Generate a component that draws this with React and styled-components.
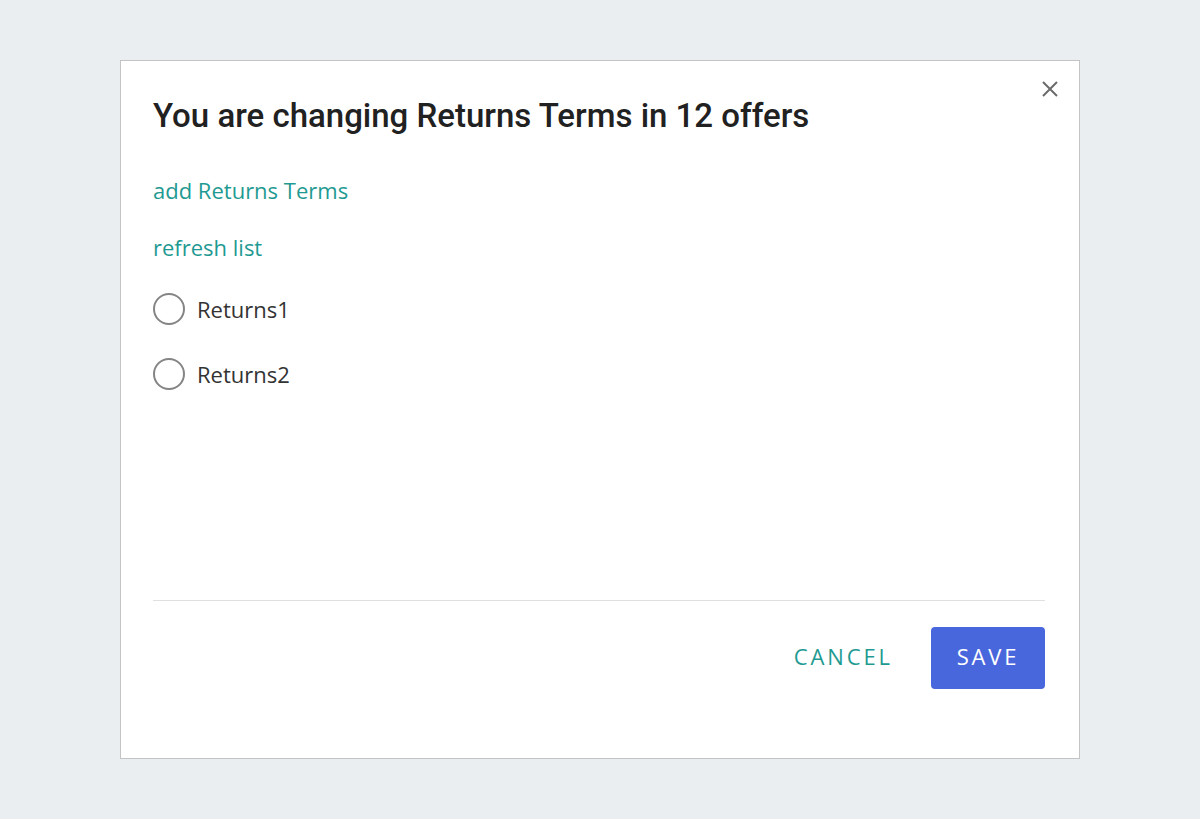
import React, { useState } from "react";
import styled, { createGlobalStyle } from "styled-components";

const GlobalStyle = createGlobalStyle`
  html, body {
    margin: 0;
    padding: 0;
    background: #ebeef1;
  }
  body {
    font-family: "Open Sans", "Liberation Sans", sans-serif;
  }
`;

const Page = styled.div`
  width: 1200px;
  height: 819px;
  display: flex;
  align-items: flex-start;
  justify-content: center;
  padding-top: 60px;
  box-sizing: border-box;
`;

const Dialog = styled.div`
  position: relative;
  width: 960px;
  height: 699px;
  box-sizing: border-box;
  background: #fff;
  border: 1px solid #c4c4c4;
  display: flex;
  flex-direction: column;
  padding: 35px 34px 0 32px;
`;

const CloseButton = styled.button`
  position: absolute;
  top: 17px;
  right: 18px;
  width: 22px;
  height: 22px;
  padding: 0;
  border: none;
  background: none;
  cursor: pointer;
  display: flex;
  align-items: center;
  justify-content: center;
`;

const Title = styled.h2`
  margin: 0;
  font-family: Roboto, "Liberation Sans", sans-serif;
  font-weight: 500;
  font-size: 33px;
  line-height: 40px;
  color: #212121;
`;

const Body = styled.div`
  flex: 1;
  display: flex;
  flex-direction: column;
  padding-top: 39px;
`;

const Link = styled.a`
  display: block;
  font-size: 22px;
  line-height: 30px;
  color: #1f9a92;
  text-decoration: none;
  cursor: pointer;
  margin-bottom: ${({ $gap }) => $gap}px;
`;

const Option = styled.label`
  display: flex;
  align-items: center;
  gap: 12px;
  height: 34px;
  margin-bottom: 31px;
  cursor: pointer;
  font-size: 22px;
  color: #333;
`;

const Circle = styled.span`
  width: 28px;
  height: 28px;
  border-radius: 50%;
  border: 2px solid ${({ $checked }) => ($checked ? "#1f9a92" : "#858585")};
  box-sizing: content-box;
  display: flex;
  align-items: center;
  justify-content: center;
  &::after {
    content: "";
    width: 16px;
    height: 16px;
    border-radius: 50%;
    background: #1f9a92;
    display: ${({ $checked }) => ($checked ? "block" : "none")};
  }
`;

const Divider = styled.hr`
  margin: 0;
  border: none;
  border-top: 1px solid #e0e0e0;
`;

const Footer = styled.div`
  display: flex;
  justify-content: flex-end;
  align-items: center;
  gap: 30px;
  padding: 26px 0 69px;
`;

const TextButton = styled.button`
  border: none;
  background: none;
  padding: 0 8px 4px;
  height: 62px;
  font-family: "Open Sans", "Liberation Sans", sans-serif;
  font-size: 22px;
  letter-spacing: 2.9px;
  color: #1f9a92;
  cursor: pointer;
`;

const SaveButton = styled.button`
  border: none;
  border-radius: 4px;
  background: #4967dc;
  color: #fff;
  width: 114px;
  height: 62px;
  padding: 0 0 4px;
  font-family: "Open Sans", "Liberation Sans", sans-serif;
  font-size: 22px;
  letter-spacing: 2.8px;
  cursor: pointer;
`;

const options = ["Returns1", "Returns2"];

export default function App() {
  const [selected, setSelected] = useState(null);
  return (
    <>
      <GlobalStyle />
      <Page>
        <Dialog>
          <CloseButton aria-label="close">
            <svg width="18" height="18" viewBox="0 0 18 18">
              <path d="M2 2 L16 16 M16 2 L2 16" stroke="#6b6b6b" strokeWidth="2" />
            </svg>
          </CloseButton>
          <Title>You are changing Returns Terms in 12 offers</Title>
          <Body>
            <Link $gap={27}>add Returns Terms</Link>
            <Link $gap={30}>refresh list</Link>
            {options.map((o) => (
              <Option key={o} onClick={() => setSelected(o)}>
                <Circle $checked={selected === o} />
                {o}
              </Option>
            ))}
          </Body>
          <Divider />
          <Footer>
            <TextButton>CANCEL</TextButton>
            <SaveButton>SAVE</SaveButton>
          </Footer>
        </Dialog>
      </Page>
    </>
  );
}
